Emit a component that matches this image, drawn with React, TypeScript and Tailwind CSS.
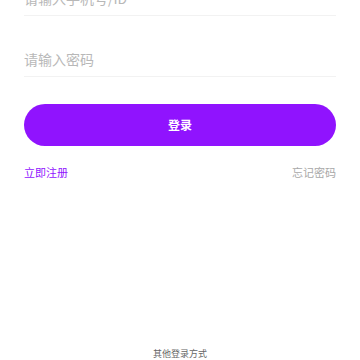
export default function App() {
  return (
    <div
      className="w-[360px] h-[360px] overflow-hidden bg-white flex flex-col px-6"
      style={{ fontFamily: '"Noto Sans CJK SC", "Noto Sans", sans-serif' }}
    >
      <div className="-mt-[45px]">
        <div className="pt-7 border-b border-[#f2f2f2]">
          <input
            className="w-full h-[30px] mb-[2px] text-[14px] text-[#333] placeholder-[#b8b8b8] outline-none bg-transparent"
            placeholder="请输入手机号/ID"
          />
        </div>
        <div className="pt-7 border-b border-[#f2f2f2]">
          <input
            type="password"
            className="w-full h-[30px] mb-[2px] text-[14px] text-[#333] placeholder-[#b8b8b8] outline-none bg-transparent"
            placeholder="请输入密码"
          />
        </div>
      </div>

      <button className="mt-[27px] h-[42px] w-full rounded-full bg-[#9013fe] text-white text-[12px] font-bold">
        登录
      </button>

      <div className="mt-5 flex justify-between items-center text-[11px] leading-[12px]">
        <span className="text-[#9013fe]">立即注册</span>
        <span className="text-[#a8a8a8]">忘记密码</span>
      </div>

      <div className="mt-auto text-center text-[9px] leading-[10px] text-[#666] pb-[1px]">
        其他登录方式
      </div>
    </div>
  );
}
